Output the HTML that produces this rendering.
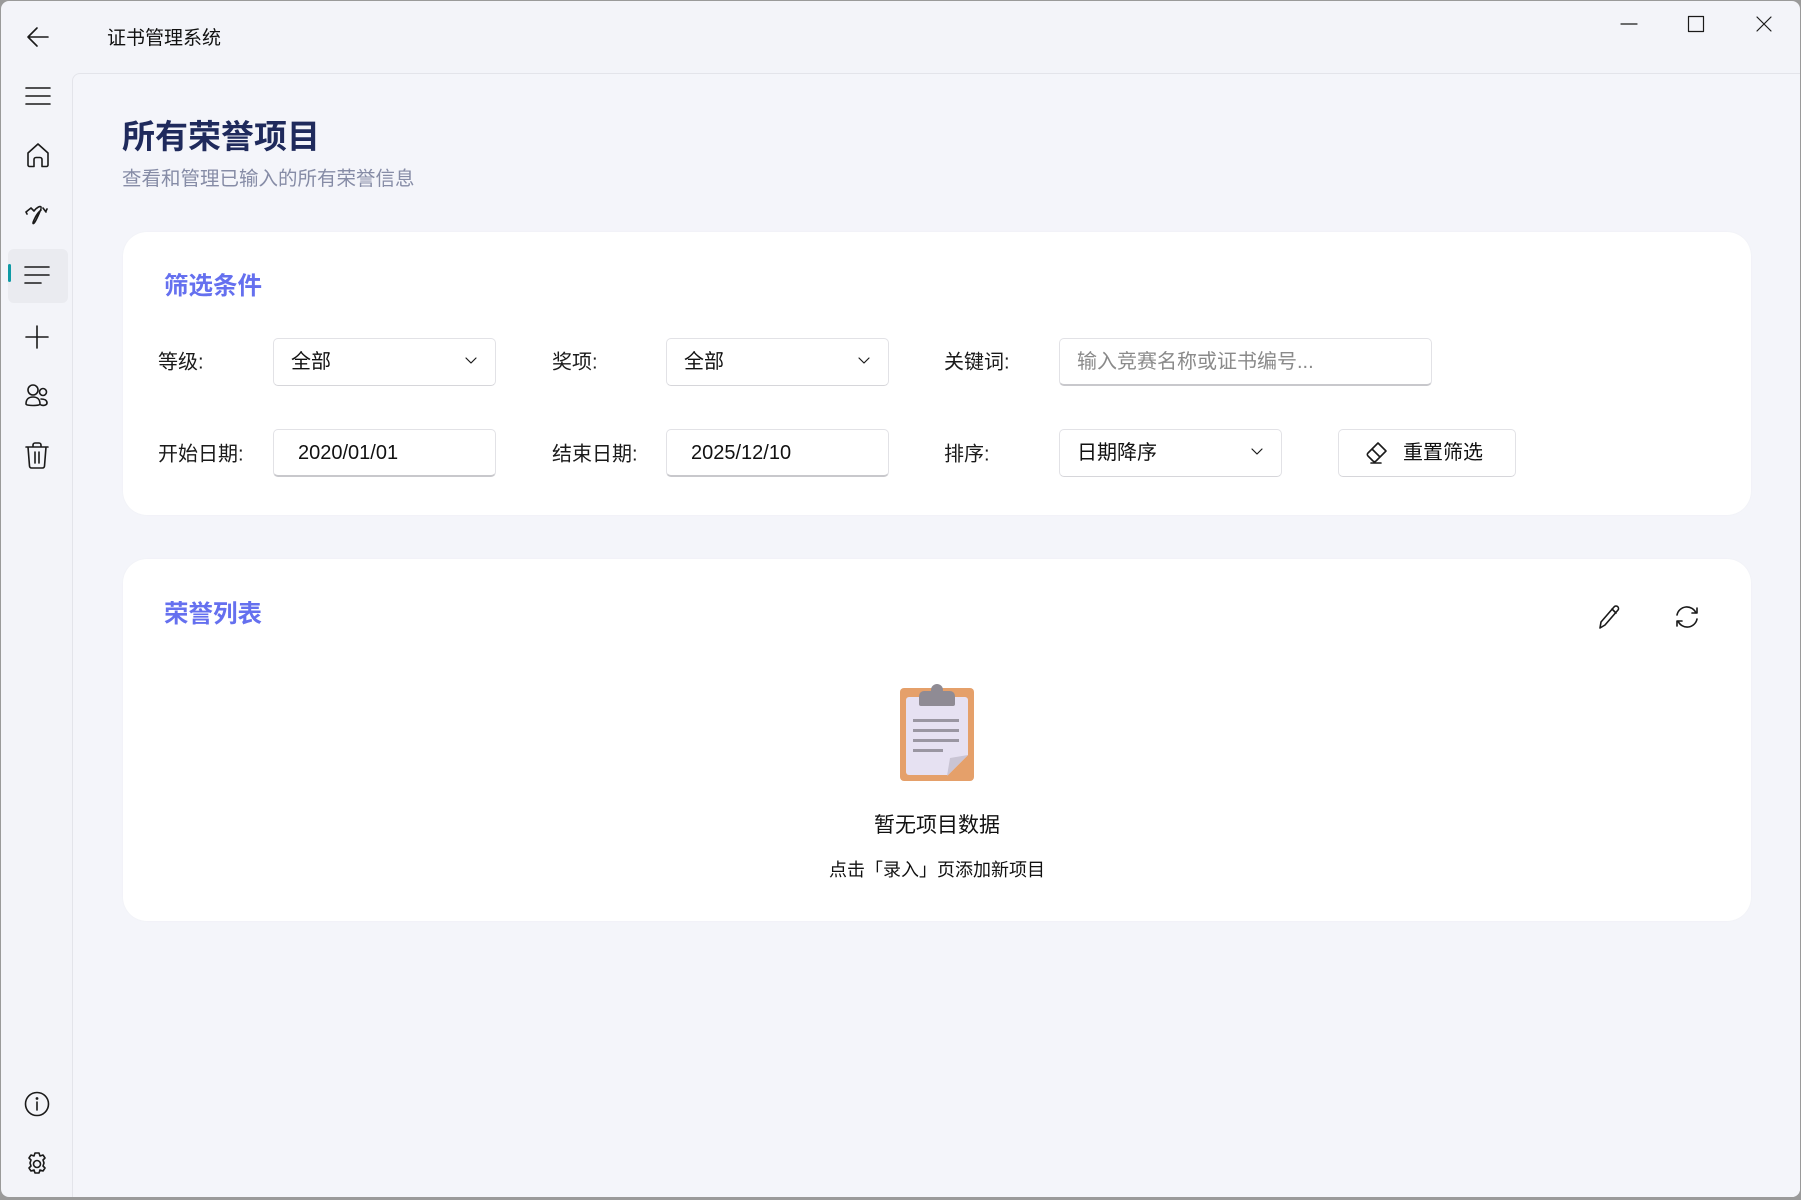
<!DOCTYPE html>
<html><head><meta charset="utf-8">
<style>
*{margin:0;padding:0;box-sizing:border-box}
body{width:1801px;height:1200px;overflow:hidden;background:#9a9a9a;font-family:"Liberation Sans","Noto Sans CJK SC",sans-serif;color:#111}
.win{position:absolute;left:1px;top:1px;width:1799px;height:1196px;background:#f3f4f9;border-radius:8px;overflow:hidden}
.content{position:absolute;left:71px;top:72px;right:0;bottom:0;background:#f4f5fa;border-top:1px solid #e3e4ea;border-left:1px solid #e3e4ea;border-top-left-radius:8px}
.abs{position:absolute}
svg{position:absolute;fill:none;stroke:#1a1a1a;stroke-width:1.6;stroke-linecap:round;stroke-linejoin:round}
.card{position:absolute;left:50px;background:#fff;border-radius:24px;width:1628px;box-shadow:0 0 2px rgba(0,0,0,.03)}
.lab{position:absolute;font-size:20px;color:#1a1a1a;transform:translateY(-50%)}
.box{position:absolute;background:#fff;border:1px solid #e2e2e6;border-bottom:2px solid #c8c8cc;border-radius:5px;height:48px;font-size:20px;line-height:46px;padding-left:17px;color:#111}
.dd{border-bottom:1px solid #d6d6da}
.chev{position:absolute;right:18px;top:18px;width:12px;height:8px}
h3{position:absolute;font-size:24.5px;color:#6570ef;font-weight:bold}
</style></head><body>
<div class="win">
<svg style="left:25px;top:25px" width="24" height="22" viewBox="0 0 24 22"><path d="M22 11H3M11 2L2 11l9 9"/></svg>
<div class="abs" style="left:106px;top:22px;font-size:19px">证书管理系统</div>
<svg style="left:1618px;top:17px" width="20" height="10"><path d="M2 6h16" stroke-width="1.2"/></svg>
<svg style="left:1686px;top:14px" width="18" height="18"><rect x="1.5" y="1.5" width="15" height="15" stroke-width="1.2" stroke-linecap="butt"/></svg>
<svg style="left:1754px;top:14px" width="18" height="18"><path d="M2 2l14 14M16 2L2 16" stroke-width="1.2"/></svg>

<!-- sidebar -->
<svg style="left:24px;top:85px" width="26" height="20"><path d="M1 2h24M1 10h24M1 18h24"/></svg>
<svg style="left:24px;top:141px" width="26" height="26"><path d="M3 11L13 2l10 9v12a1.5 1.5 0 0 1-1.5 1.5H17v-7a2 2 0 0 0-2-2h-4a2 2 0 0 0-2 2v7H4.5A1.5 1.5 0 0 1 3 23z"/></svg>
<svg style="left:24px;top:203px" width="26" height="22"><path d="M1 8l5-4 3 3M2 10l-1-2M9 7c3-4 6-5 7-4s-3 9-5 13-3 4-3 3 3-8 6-11l2-2M18 4l3 4M21 7l1-2"/></svg>
<div class="abs" style="left:7px;top:248px;width:60px;height:54px;background:#eaebf0;border-radius:6px"></div>
<div class="abs" style="left:7px;top:263px;width:3px;height:18px;background:#0f9aa5;border-radius:2px"></div>
<svg style="left:23px;top:264px" width="26" height="20"><path d="M1 2h24M1 10h24M1 18h16"/></svg>
<svg style="left:23px;top:323px" width="26" height="26"><path d="M13 2v22M2 13h22"/></svg>
<svg style="left:23px;top:382px" width="26" height="26"><circle cx="9" cy="7" r="5"/><circle cx="19" cy="9" r="3.5"/><path d="M2 21c0-5 3-7 7-7s7 2 7 7c0 2-14 2-14 0zM17 16c3 0 6 1 6 4 0 2-3 3-6 2"/></svg>
<svg style="left:24px;top:441px" width="24" height="27"><path d="M1 5h22M8 5V3a2 2 0 0 1 2-2h4a2 2 0 0 1 2 2v2M3 5l1.5 19a2 2 0 0 0 2 2h11a2 2 0 0 0 2-2L21 5M10 10v11M14 10v11"/></svg>
<svg style="left:23px;top:1090px" width="26" height="26"><circle cx="13" cy="13" r="11.5"/><path d="M13 11v8"/><circle cx="13" cy="7.5" r=".6" fill="#1a1a1a"/></svg>
<svg style="left:23px;top:1150px" width="26" height="26" viewBox="0 0 26 26"><path d="M11 2h4l1 3 3-1 2 3-2 2 1 3-1 3 2 2-2 3-3-1-1 3h-4l-1-3-3 1-2-3 2-2-1-3 1-3-2-2 2-3 3 1z"/><circle cx="13" cy="13" r="3.5"/></svg>

<div class="content">
<div class="abs" style="left:49px;top:36px;font-size:33px;font-weight:bold;color:#1f2a5c">所有荣誉项目</div>
<div class="abs" style="left:49px;top:88px;font-size:19.5px;color:#868ca6">查看和管理已输入的所有荣誉信息</div>

<div class="card" style="top:158px;height:283px">
<h3 style="left:41px;top:35px">筛选条件</h3>
<div class="lab" style="left:35px;top:128px">等级:</div>
<div class="box dd" style="left:150px;top:106px;width:223px">全部<svg class="chev" viewBox="0 0 12 8"><path d="M1 1l5 5 5-5" stroke-width="1.2"/></svg></div>
<div class="lab" style="left:429px;top:128px">奖项:</div>
<div class="box dd" style="left:543px;top:106px;width:223px">全部<svg class="chev" viewBox="0 0 12 8"><path d="M1 1l5 5 5-5" stroke-width="1.2"/></svg></div>
<div class="lab" style="left:821px;top:128px">关键词:</div>
<div class="box" style="left:936px;top:106px;width:373px;color:#8a8a8a">输入竞赛名称或证书编号...</div>

<div class="lab" style="left:35px;top:220px">开始日期:</div>
<div class="box" style="left:150px;top:197px;width:223px;padding-left:24px">2020/01/01</div>
<div class="lab" style="left:429px;top:220px">结束日期:</div>
<div class="box" style="left:543px;top:197px;width:223px;padding-left:24px">2025/12/10</div>
<div class="lab" style="left:821px;top:220px">排序:</div>
<div class="box dd" style="left:936px;top:197px;width:223px">日期降序<svg class="chev" viewBox="0 0 12 8"><path d="M1 1l5 5 5-5" stroke-width="1.2"/></svg></div>
<div class="box dd" style="left:1215px;top:197px;width:178px;padding-left:64px">重置筛选<svg style="left:26px;top:11px" width="24" height="24"><path d="M13 2l8 8-10 10a2 2 0 0 1-3 0l-5-5a2 2 0 0 1 0-3zM7 8l8 8M6 22h10"/></svg></div>
</div>

<div class="card" style="top:485px;height:362px">
<h3 style="left:41px;top:36px">荣誉列表</h3>
<svg style="left:1474px;top:45px" width="24" height="26"><path d="M3 24l1-6L17 3a2.5 2.5 0 0 1 4 3L8 21zM15 5l4 4"/></svg>
<svg style="left:1551px;top:46px" width="26" height="24"><path d="M3 10a10 10 0 0 1 19-2M23 3v5h-5M23 14a10 10 0 0 1-19 2M3 21v-5h5"/></svg>
<div class="abs" style="left:777px;top:129px;width:74px;height:93px;background:#e5a06a;border-radius:4px"></div>
<div class="abs" style="left:783px;top:138px;width:62px;height:78px;background:#e6e1f2;border-radius:3px"></div>
<div class="abs" style="left:796px;top:132px;width:36px;height:15px;background:#8f8b94;border-radius:5px 5px 2px 2px"></div>
<div class="abs" style="left:808px;top:125px;width:12px;height:12px;background:#8f8b94;border-radius:50%"></div>
<div class="abs" style="left:790px;top:160px;width:46px;height:3px;background:#9a96a2"></div>
<div class="abs" style="left:790px;top:170px;width:46px;height:3px;background:#9a96a2"></div>
<div class="abs" style="left:790px;top:180px;width:46px;height:3px;background:#9a96a2"></div>
<div class="abs" style="left:790px;top:190px;width:30px;height:3px;background:#9a96a2"></div>
<svg style="left:824px;top:195px;stroke:none" width="22" height="22"><path d="M0 22L21 1v21z" fill="#e5a06a"/><path d="M0 22l3-18 18-3z" fill="#c9c4d4"/></svg>
<div class="abs" style="left:0;width:100%;text-align:center;top:250px;font-size:21px">暂无项目数据</div>
<div class="abs" style="left:0;width:100%;text-align:center;top:297px;font-size:18px">点击「录入」页添加新项目</div>
</div>
</div>
</div>
</body></html>
